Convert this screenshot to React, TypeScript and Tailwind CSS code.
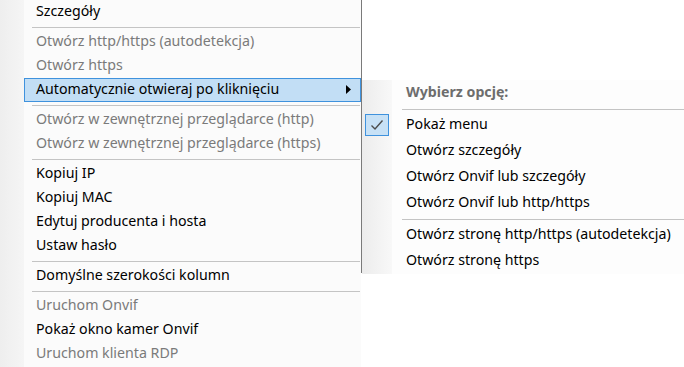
import React from "react";

type Entry =
  | { kind: "item"; label: string; disabled?: boolean; active?: boolean; submenu?: boolean }
  | { kind: "sep" };

const mainMenu: Entry[] = [
  { kind: "item", label: "Szczegóły" },
  { kind: "sep" },
  { kind: "item", label: "Otwórz http/https (autodetekcja)", disabled: true },
  { kind: "item", label: "Otwórz https", disabled: true },
  { kind: "item", label: "Automatycznie otwieraj po kliknięciu", active: true, submenu: true },
  { kind: "sep" },
  { kind: "item", label: "Otwórz w zewnętrznej przeglądarce (http)", disabled: true },
  { kind: "item", label: "Otwórz w zewnętrznej przeglądarce (https)", disabled: true },
  { kind: "sep" },
  { kind: "item", label: "Kopiuj IP" },
  { kind: "item", label: "Kopiuj MAC" },
  { kind: "item", label: "Edytuj producenta i hosta" },
  { kind: "item", label: "Ustaw hasło" },
  { kind: "sep" },
  { kind: "item", label: "Domyślne szerokości kolumn" },
  { kind: "sep" },
  { kind: "item", label: "Uruchom Onvif", disabled: true },
  { kind: "item", label: "Pokaż okno kamer Onvif" },
  { kind: "item", label: "Uruchom klienta RDP", disabled: true },
];

const subOptions = [
  { label: "Pokaż menu", checked: true },
  { label: "Otwórz szczegóły" },
  { label: "Otwórz Onvif lub szczegóły" },
  { label: "Otwórz Onvif lub http/https" },
];

const subPages = ["Otwórz stronę http/https (autodetekcja)", "Otwórz stronę https"];

const MenuRow: React.FC<{ entry: Entry }> = ({ entry }) => {
  if (entry.kind === "sep") {
    return (
      <div className="h-[6px] flex items-center pl-[32px] pr-[1px]">
        <div className="h-px w-full bg-[#c4c4c4]" />
      </div>
    );
  }
  return (
    <div
      className={
        entry.active
          ? "h-[24px] flex items-center pl-[11px] pr-[9px] bg-[#c2def5] border border-[#3f92dd] ml-[24px] pb-px"
          : "h-[24px] flex items-center pl-[36px] pr-[10px] pb-px"
      }
    >
      <span className={entry.disabled ? "flex-1 text-[#7a7a7a]" : "flex-1 text-black"}>
        {entry.label}
      </span>
      {entry.submenu && (
        <svg width="5" height="9" viewBox="0 0 5 9">
          <path d="M0 0 L5 4.5 L0 9 Z" fill="#000" />
        </svg>
      )}
    </div>
  );
};

const SubRow: React.FC<{ label: string; checked?: boolean }> = ({ label, checked }) => (
  <div className="h-[26px] flex items-center">
    <div className="w-[44px] h-full flex items-center pl-[3px]">
      {checked && (
        <div className="w-[24px] h-[22px] bg-[#c7e1f6] border border-[#3f92dd] flex items-center justify-center">
          <svg width="14" height="12" viewBox="0 0 14 12">
            <path d="M1.5 6.5 L5 10 L12.5 1.5" fill="none" stroke="#4d4d4d" strokeWidth="1.4" />
          </svg>
        </div>
      )}
    </div>
    <span className="text-black pb-px">{label}</span>
  </div>
);

export default function App() {
  return (
    <div
      className="w-[684px] h-[367px] overflow-hidden bg-white flex text-[14.2px] leading-none"
      style={{ fontFamily: '"Noto Sans", "Open Sans", sans-serif' }}
    >
      <div className="w-[361px] h-full flex bg-[#fbfbfb]">
        <div className="w-[24px] h-full bg-gradient-to-r from-[#eeeeee] to-[#f5f5f5]" />
        <div className="flex-1 flex flex-col -ml-[24px]">
          {mainMenu.map((e, i) => (
            <MenuRow key={i} entry={e} />
          ))}
        </div>
      </div>
      <div className="w-px h-[273px] bg-[#7a7a7a]" />
      <div className="flex-1 flex flex-col pt-[80px]">
        <div className="h-[194px] flex bg-[#fdfdfd]">
          <div className="w-[30px] h-full bg-gradient-to-r from-[#ececec] to-[#f8f8f8]" />
          <div className="flex-1 flex flex-col -ml-[30px]">
            <div className="h-[26px] flex items-center pl-[44px] pb-[2px] font-bold text-[#6d6d6d]">
              Wybierz opcję:
            </div>
            <div className="h-[6px] flex items-center pl-[40px]">
              <div className="h-px w-full bg-[#c4c4c4]" />
            </div>
            {subOptions.map((o) => (
              <SubRow key={o.label} label={o.label} checked={o.checked} />
            ))}
            <div className="h-[6px] flex items-center pl-[40px]">
              <div className="h-px w-full bg-[#c4c4c4]" />
            </div>
            {subPages.map((p) => (
              <SubRow key={p} label={p} />
            ))}
          </div>
        </div>
      </div>
    </div>
  );
}
